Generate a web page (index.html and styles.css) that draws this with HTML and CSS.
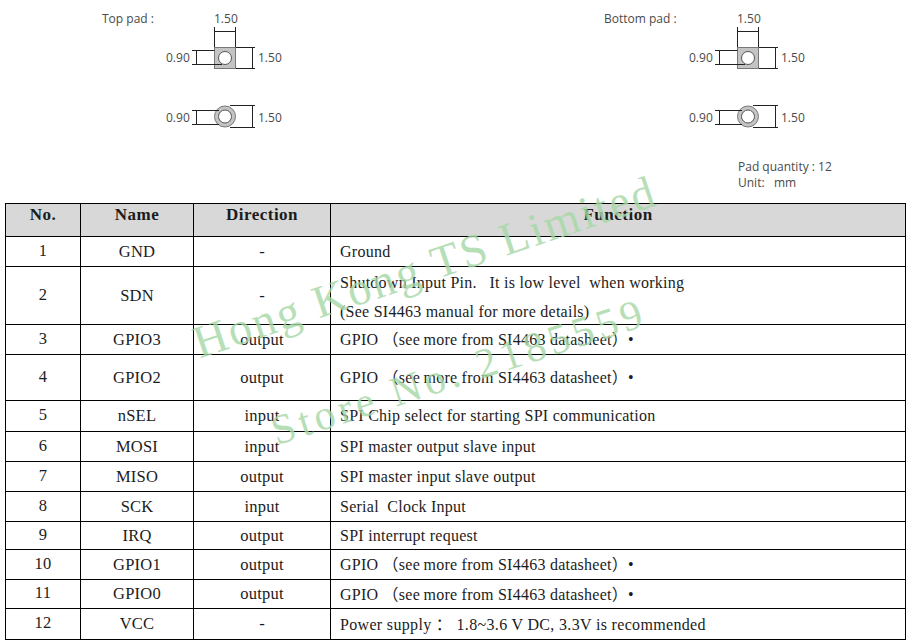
FILE: index.html
```html
<!DOCTYPE html>
<html lang="en">
<head>
<meta charset="utf-8">
<title>Pad dimensions and pin functions</title>
<link rel="stylesheet" href="styles.css">
</head>
<body>
<div class="sheet">
  <svg class="drawing" width="911" height="203" viewBox="0 0 911 203" xmlns="http://www.w3.org/2000/svg">
    <defs>
      <g id="padset">
        <text class="dim" x="1" y="23">1.50</text>
        <path class="line" d="M1.500 27V47M22.500 27V47M1.500 31.500H22.500"/>
        <rect class="pad" x="1.500" y="47.500" width="21" height="21"/>
        <circle class="hole" cx="12" cy="58" r="6.500"/>
        <text class="dim" x="-47" y="62">0.90</text>
        <path class="line" d="M-16.500 50.500V64M-21 50.500H1.500M-21 64.500H9M23 47.500H42M23 68.500H42M39.500 47V68.500"/>
        <text class="dim" x="45" y="62">1.50</text>
        <circle class="pad" cx="12" cy="116.500" r="10.500"/>
        <circle class="hole" cx="12" cy="116.500" r="6.500"/>
        <text class="dim" x="-47" y="122">0.90</text>
        <path class="line" d="M-16.500 110.500V124M-21 110.500H6M-21 124.500H6M17 105.500H42M17 127.500H42M39.500 105.500V127.500"/>
        <text class="dim" x="45" y="122">1.50</text>
      </g>
    </defs>
    <text class="label" x="102" y="23">Top pad :</text>
    <use href="#padset" x="213"/>
    <text class="label" x="604" y="23">Bottom pad :</text>
    <use href="#padset" x="736"/>
    <text class="label" x="738" y="171">Pad quantity : 12</text>
    <text class="label" x="738" y="187">Unit:&#160;&#160; mm</text>
  </svg>
  <table class="pins">
    <thead>
      <tr class="row-33"><th class="col-no">No.</th><th class="col-name">Name</th><th class="col-dir">Direction</th><th class="col-fn">Function</th></tr>
    </thead>
    <tbody>
      <tr class="row-30"><td class="no">1</td><td>GND</td><td>-</td><td class="fn">Ground</td></tr>
      <tr class="row-58"><td class="no">2</td><td>SDN</td><td>-</td><td class="fn fn-two"><div class="fn-line">Shutdown Input Pin.&#160;&#160; It is low level&#160; when working</div><div class="fn-line">(See SI4463 manual for more details)</div></td></tr>
      <tr class="row-30"><td class="no">3</td><td>GPIO3</td><td>output</td><td class="fn fn-gpio">GPIO （see&#8201;more from SI4463 datasheet）•</td></tr>
      <tr class="row-46"><td class="no">4</td><td>GPIO2</td><td>output</td><td class="fn fn-gpio">GPIO （see&#8201;more from SI4463 datasheet）•</td></tr>
      <tr class="row-31"><td class="no">5</td><td>nSEL</td><td>input</td><td class="fn">SPI Chip select for starting SPI communication</td></tr>
      <tr class="row-30"><td class="no">6</td><td>MOSI</td><td>input</td><td class="fn">SPI master output slave input</td></tr>
      <tr class="row-30"><td class="no">7</td><td>MISO</td><td>output</td><td class="fn">SPI master input slave output</td></tr>
      <tr class="row-30"><td class="no">8</td><td>SCK</td><td>input</td><td class="fn">Serial&#160; Clock Input</td></tr>
      <tr class="row-28"><td class="no">9</td><td>IRQ</td><td>output</td><td class="fn">SPI interrupt request</td></tr>
      <tr class="row-30"><td class="no">10</td><td>GPIO1</td><td>output</td><td class="fn fn-gpio">GPIO （see&#8201;more from SI4463 datasheet）•</td></tr>
      <tr class="row-29"><td class="no">11</td><td>GPIO0</td><td>output</td><td class="fn fn-gpio">GPIO （see&#8201;more from SI4463 datasheet）•</td></tr>
      <tr class="row-31"><td class="no">12</td><td>VCC</td><td>-</td><td class="fn fn-power">Power supply ：&#160;1.8~3.6 V DC, 3.3V is recommended</td></tr>
    </tbody>
  </table>
  <div class="mark mark-shop">Hong Kong TS Limited</div>
  <div class="mark mark-store">Store No. 2185559</div>
</div>
</body>
</html>
```
FILE: styles.css
```css
html, body {
  margin: 0;
  padding: 0;
  background: #fff;
}
.sheet {
  position: relative;
  width: 911px;
  height: 644px;
  overflow: hidden;
  font-family: "Liberation Serif", "Noto Sans CJK SC", serif;
  color: #1c1c1c;
}
.drawing {
  display: block;
}
.label, .dim {
  font-family: "Open Sans", "Liberation Sans", sans-serif;
  font-size: 12px;
  fill: #4a4a4a;
}
.line {
  fill: none;
  stroke: #222;
  stroke-width: 1;
}
.pad {
  fill: #c4c4c4;
  stroke: #777;
  stroke-width: 1;
}
.hole {
  fill: #fff;
  stroke: #555;
  stroke-width: 1;
}
.pins {
  margin-left: 5px;
  width: 901px;
  table-layout: fixed;
  border-collapse: collapse;
  font-size: 16.500px;
  letter-spacing: 0.200px;
}
.pins th, .pins td {
  border: 1px solid #000;
  padding: 0;
  text-align: center;
  vertical-align: middle;
}
.pins th {
  background: #d8d8d8;
  font-size: 17px;
  font-weight: bold;
  letter-spacing: 0.500px;
  padding-bottom: 10px;
}
.pins td.no {
  padding-bottom: 2px;
}
.pins td.fn {
  font-size: 16px;
  letter-spacing: 0.250px;
  text-align: left;
  padding-left: 9px;
}
.pins td.fn-two {
  padding-bottom: 0;
}
.pins td.fn-gpio {
  padding-bottom: 3px;
}
.pins td.fn-power {
  letter-spacing: 0.330px;
  padding-bottom: 2px;
}
.col-no { width: 74px; }
.col-name { width: 112px; }
.col-dir { width: 136px; }
.fn-line {
  line-height: 29px;
}
.fn-line:first-child {
  margin-top: 1px;
}
.fn-line:last-child {
  margin-bottom: -2px;
}
.row-28 { height: 28px; }
.row-29 { height: 29px; }
.row-30 { height: 30px; }
.row-31 { height: 31px; }
.row-33 { height: 33px; }
.row-46 { height: 46px; }
.row-58 { height: 58px; }
.mark {
  position: absolute;
  color: #a6d8a6;
  opacity: 0.8;
  white-space: nowrap;
  transform-origin: 0 100%;
  line-height: 1;
}
.mark-shop {
  left: 202px;
  top: 320px;
  font-size: 46px;
  letter-spacing: 2.400px;
  transform: rotate(-18.500deg);
}
.mark-store {
  left: 279px;
  top: 410px;
  font-size: 42px;
  letter-spacing: 4.300px;
  transform: rotate(-18deg);
}
```
